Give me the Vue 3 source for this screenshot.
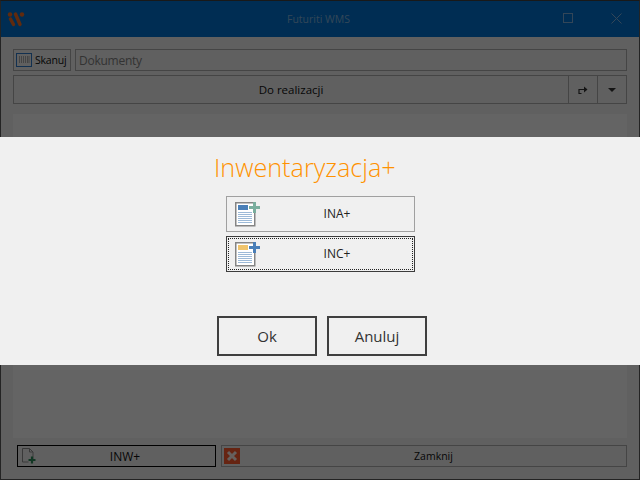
<script setup>
const docLines = [212, 214, 216, 218, 220, 222]
const options = [
  { label: 'INA+', head: '#4a7fb8', plus: '#7aae9e', focused: false },
  { label: 'INC+', head: '#f0c46c', plus: '#4a7fb8', focused: true },
]
</script>

<template>
  <div class="window">
    <header class="titlebar">
      <svg class="logo" width="18" height="16" viewBox="0 0 18 16">
        <circle cx="3" cy="3.5" r="2.2" fill="#f26a21" />
        <path d="M3.5 8l3 5.5M8.5 3l4.5 10.5" stroke="#f26a21" stroke-width="3.4" stroke-linecap="round" fill="none" />
        <circle cx="15" cy="3.5" r="2.2" fill="#f26a21" />
      </svg>
      <span class="app-title">Futuriti WMS</span>
      <svg class="win-ic max" width="10" height="10" viewBox="0 0 10 10"><rect x=".5" y=".5" width="9" height="9" fill="none" stroke="currentColor" /></svg>
      <svg class="win-ic close" width="11" height="11" viewBox="0 0 11 11"><path d="M.5.5l10 10M10.5.5l-10 10" stroke="currentColor" fill="none" /></svg>
    </header>

    <main class="content">
      <div class="row-scan">
        <button class="btn scan">
          <svg width="16" height="14" viewBox="0 0 16 14">
            <rect x=".5" y=".5" width="15" height="13" fill="none" stroke="#2f78c8" />
            <path d="M3.5 3v7M5.5 3v7M7.5 3v7M9.5 3v7M11.5 3v7M13 3v7" stroke="#aaa" fill="none" />
          </svg>
          <span>Skanuj</span>
        </button>
        <div class="search">Dokumenty</div>
      </div>

      <div class="row-filter">
        <div class="filter-label">Do realizacji</div>
        <div class="filter-btn">
          <svg width="12" height="10" viewBox="0 0 12 10"><path d="M2 9V4.5H7" stroke="#333" stroke-width="1.2" fill="none" /><path d="M7 1.5l3.5 3-3.5 3z" fill="#333" /><path d="M2 8.5h2.5" stroke="#333" stroke-width="1" /></svg>
        </div>
        <div class="filter-btn">
          <svg width="10" height="6" viewBox="0 0 10 6"><path d="M1 1h8L5 5z" fill="#333" /></svg>
        </div>
      </div>

      <div class="list"></div>

      <div class="footer">
        <button class="btn foot inw">
          <svg class="foot-ic" width="14" height="16" viewBox="0 0 14 16">
            <path d="M.5.5h7l3.5 3.5v8M11 4H7.5V.5M.5.5v13.5h6" stroke="#909090" fill="none" />
            <path d="M6.5 12h7M10 8.5v7" stroke="#2f8a5a" stroke-width="2.2" fill="none" />
          </svg>
          <span>INW+</span>
        </button>
        <button class="btn foot close-btn">
          <svg class="foot-ic x-ic" width="16" height="16" viewBox="0 0 16 16">
            <rect width="16" height="16" fill="#ff5a2d" />
            <path d="M4 4l8 8M12 4l-8 8" stroke="#fff" stroke-width="3" fill="none" opacity=".9" />
          </svg>
          <span>Zamknij</span>
        </button>
      </div>
    </main>

    <div class="dim"></div>

    <section class="dialog">
      <h1 class="dlg-title">Inwentaryzacja+</h1>
      <div class="options">
        <button v-for="o in options" :key="o.label" class="opt" :class="{ focused: o.focused }">
          <svg class="opt-ic" width="26" height="26" viewBox="235 201 26 26">
            <rect x="235.75" y="202.75" width="19" height="23" fill="#fff" stroke="#848484" stroke-width="1.5" />
            <rect x="238" y="205" width="10" height="5" :fill="o.head" />
            <rect v-for="y in docLines" :key="y" x="238" :y="y" width="14" height="1" fill="#9dbad8" />
            <path d="M249 207.5h11M254.5 202v11" :stroke="o.plus" stroke-width="3" fill="none" />
          </svg>
          <span>{{ o.label }}</span>
        </button>
      </div>
      <div class="actions">
        <button class="act">Ok</button>
        <button class="act">Anuluj</button>
      </div>
    </section>
  </div>
</template>

<style scoped>
.window {
  position: relative;
  width: 640px;
  height: 480px;
  box-sizing: border-box;
  border: 1px solid #5a5a5a;
  border-top-color: #404040;
  display: flex;
  flex-direction: column;
  background: #f0f0f0;
  font-family: "Open Sans", "Noto Sans", sans-serif;
  font-size: 11.5px;
  color: #111;
}
.titlebar {
  position: relative;
  height: 36px;
  flex: none;
  background: #0072cf;
  color: #7fb0dc;
  display: flex;
  align-items: center;
}
.logo { margin-left: 6px; margin-top: -1px; }
.app-title {
  position: absolute;
  left: 0;
  right: 3px;
  text-align: center;
  font-size: 10.5px;
  margin-top: -1px;
}
.win-ic { position: absolute; top: 12px; }
.max { left: 562px; }
.close { left: 610px; }
.content {
  flex: 1;
  display: flex;
  flex-direction: column;
  padding: 12px 12px 12px 12px;
  min-height: 0;
}
.btn {
  font: inherit;
  color: inherit;
  background: transparent;
  border: 1px solid #adadad;
  padding: 0;
  display: flex;
  align-items: center;
  position: relative;
}
.row-scan { display: flex; gap: 4px; height: 22px; }
.scan { width: 58px; padding-left: 2px; gap: 3px; box-sizing: border-box; font-size: 10.5px; letter-spacing: -0.2px; }
.search {
  flex: 1;
  border: 1px solid #adadad;
  background: #f0f0f0;
  color: #808080;
  font-size: 12px;
  letter-spacing: -0.25px;
  line-height: 21px;
  padding-left: 3px;
}
.row-filter {
  display: flex;
  height: 29px;
  margin-top: 4px;
  border: 1px solid #adadad;
  box-sizing: border-box;
}
.filter-label { flex: 1; text-align: center; line-height: 27px; }
.filter-btn {
  width: 28px;
  border-left: 1px solid #adadad;
  display: flex;
  align-items: center;
  justify-content: center;
}
.list {
  flex: 1;
  margin-top: 10px;
  background: #fafafa;
}
.footer {
  display: flex;
  gap: 5px;
  height: 22px;
  margin-top: 7px;
  padding-left: 4px;
}
.foot { justify-content: center; box-sizing: border-box; }
.foot-ic { position: absolute; top: 2px; left: 4px; }
.x-ic { left: 2px; }
.inw { width: 199px; border-color: #000; padding-left: 17px; font-size: 12px; }
.close-btn { flex: 1; padding-left: 19px; font-size: 10.5px; }
.dim {
  position: absolute;
  inset: -1px;
  background: rgba(0, 0, 0, 0.6);
}
.dialog {
  position: absolute;
  left: -1px;
  right: -1px;
  top: 136px;
  height: 228px;
  background: #f0f0f0;
  display: flex;
  flex-direction: column;
  align-items: center;
}
.dlg-title {
  align-self: flex-start;
  margin: 13px 0 0 214px;
  height: 46px;
  font-size: 25.2px;
  line-height: 34px;
  font-weight: 300;
  color: #ff9200;
}
.options { display: flex; flex-direction: column; gap: 4px; }
.opt {
  position: relative;
  width: 189px;
  height: 36px;
  box-sizing: border-box;
  background: transparent;
  border: 1px solid #a0a0a0;
  font: inherit;
  font-size: 12px;
  color: #222;
  padding: 0 0 2px 34px;
}
.opt-ic { position: absolute; left: 8px; top: 4px; }
.opt.focused { border-color: #3c3c3c; outline: 1px dotted #222; outline-offset: -3px; }
.actions { display: flex; gap: 10px; margin-top: auto; margin-bottom: 9px; margin-left: 4px; }
.act {
  width: 100px;
  height: 40px;
  box-sizing: border-box;
  background: transparent;
  border: 2px solid #3f3f3f;
  font: inherit;
  font-size: 15px;
  color: #333;
}
</style>
